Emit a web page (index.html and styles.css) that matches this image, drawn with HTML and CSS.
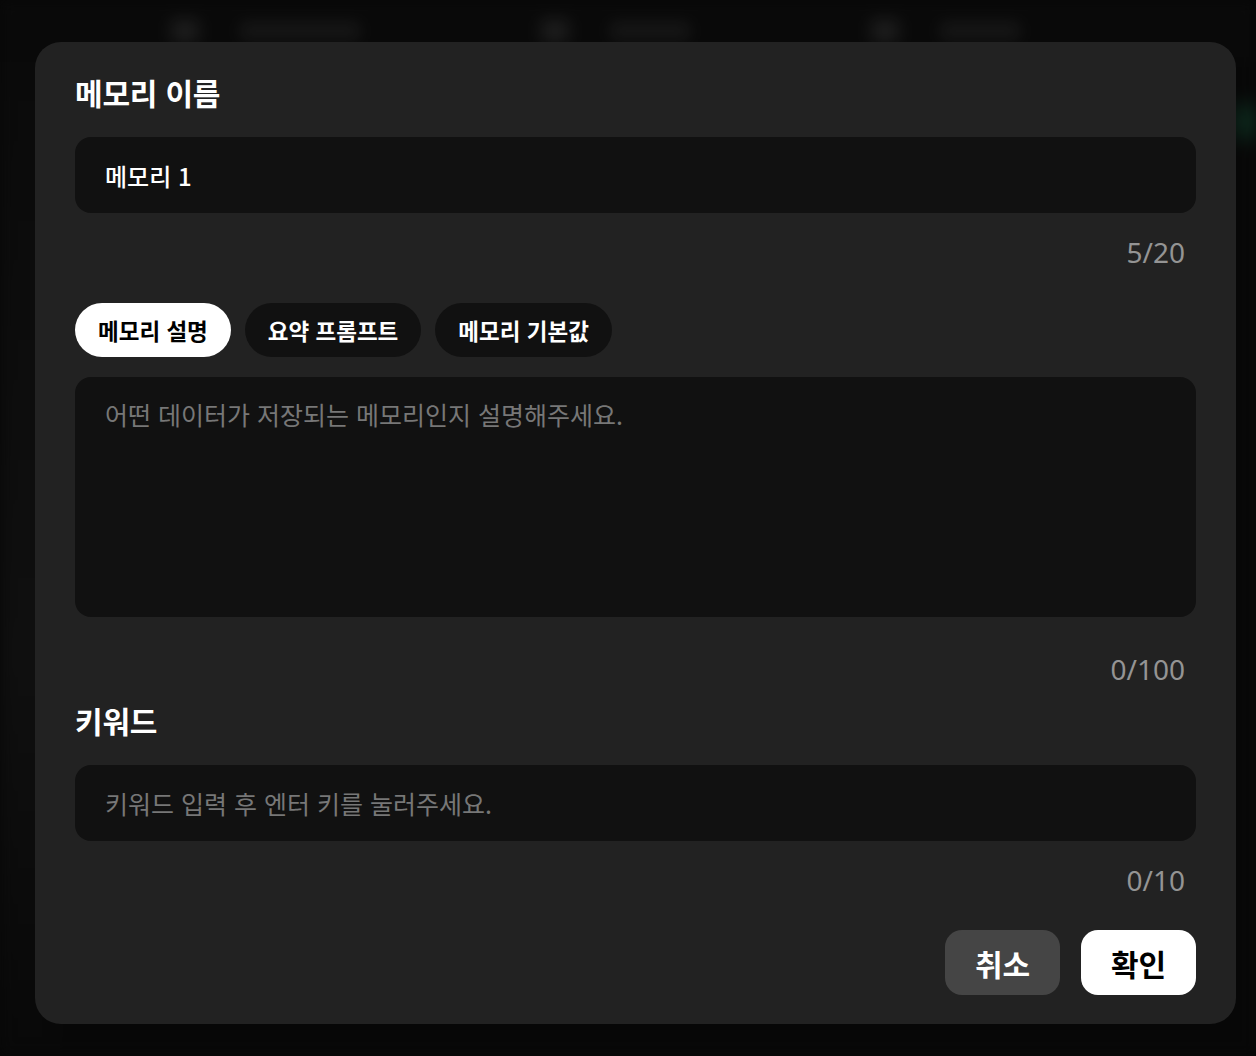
FILE: index.html
```html
<!DOCTYPE html>
<html lang="ko">
<head>
<meta charset="utf-8">
<title>메모리</title>
<link rel="stylesheet" href="styles.css">
</head>
<body>
<div class="page">
  <header class="page-header">
    <div class="nav-item"><span class="nav-icon"></span><span class="nav-text"></span></div>
    <div class="nav-item"><span class="nav-icon"></span><span class="nav-text short"></span></div>
    <div class="nav-item"><span class="nav-icon"></span><span class="nav-text short"></span></div>
  </header>
  <div class="page-body">
    <aside class="page-side"></aside>
    <main class="page-main"></main>
  </div>
</div>

<div class="overlay">
  <section class="modal">
    <h2 class="label">메모리 이름</h2>
    <input class="field" type="text" value="메모리 1">
    <div class="counter">5/20</div>

    <div class="tabs">
      <button class="tab active">메모리 설명</button>
      <button class="tab">요약 프롬프트</button>
      <button class="tab">메모리 기본값</button>
    </div>
    <textarea class="area" placeholder="어떤 데이터가 저장되는 메모리인지 설명해주세요."></textarea>
    <div class="counter counter-area">0/100</div>

    <h2 class="label label-keyword">키워드</h2>
    <input class="field field-keyword" type="text" placeholder="키워드 입력 후 엔터 키를 눌러주세요.">
    <div class="counter">0/10</div>

    <div class="actions">
      <button class="btn btn-cancel">취소</button>
      <button class="btn btn-ok">확인</button>
    </div>
  </section>
</div>
</body>
</html>
```

FILE: styles.css
```css
* { box-sizing: border-box; }

html, body {
  margin: 0;
  height: 100%;
}

body {
  background: #070707;
  font-family: "Noto Sans CJK KR", "Noto Sans", sans-serif;
  overflow: hidden;
}

/* blurred page behind the dialog */
.page {
  height: 100vh;
  display: flex;
  flex-direction: column;
  filter: blur(7px);
  opacity: 0.9;
}

.page-header {
  height: 62px;
  display: flex;
  gap: 180px;
  padding: 18px 0 0 170px;
  background: #0a0a0a;
}

.nav-item {
  display: flex;
  gap: 40px;
  align-items: flex-start;
}

.nav-icon {
  width: 30px;
  height: 26px;
  border-radius: 8px;
  background: #1c1c1c;
}

.nav-text {
  width: 120px;
  height: 18px;
  margin-top: 4px;
  border-radius: 6px;
  background: #181818;
}

.nav-text.short { width: 80px; }

.page-body {
  flex: 1;
  display: flex;
}

.page-side {
  width: 60px;
  background: linear-gradient(180deg, #0b0b0b 0%, #101010 60%, #090909 100%);
}

.page-main {
  flex: 1;
  background:
    radial-gradient(40px 30px at 100% 6%, rgba(20, 90, 60, 0.55), transparent 100%),
    #080808;
}

/* dialog */
.overlay {
  position: fixed;
  inset: 0;
  padding: 42px 0 0 35px;
}

.modal {
  width: 1201px;
  height: 982px;
  background: #222222;
  border-radius: 26px;
  padding: 31px 40px 29px 40px;
  display: flex;
  flex-direction: column;
}

.label {
  margin: 0;
  color: #ffffff;
  font-size: 30px;
  font-weight: 700;
  line-height: 38px;
  letter-spacing: -0.2px;
}

.field,
.area {
  display: block;
  width: 100%;
  border: none;
  outline: none;
  background: #111111;
  border-radius: 16px;
  color: #ffffff;
  font-family: inherit;
  font-size: 24px;
  padding: 0 30px;
}

.field {
  height: 76px;
  margin-top: 26px;
  font-weight: 500;
}

.field-keyword {
  margin-top: 26px;
  font-size: 25px;
  font-weight: 400;
}

.area {
  height: 240px;
  margin-top: 20px;
  resize: none;
  padding: 20px 30px;
  font-size: 25px;
  line-height: 34px;
}

.field::placeholder,
.area::placeholder {
  color: #777777;
  opacity: 1;
}

.counter {
  align-self: flex-end;
  margin: 21px 11px 0 0;
  color: #949494;
  font-size: 28px;
  line-height: 36px;
  font-family: "Noto Sans", "Noto Sans CJK KR", sans-serif;
}

.counter-area { margin-top: 34px; }

.label-keyword { margin-top: 14px; }

.tabs {
  display: flex;
  gap: 14px;
  margin-top: 33px;
}

.tab {
  height: 54px;
  border: none;
  border-radius: 27px;
  padding: 0 23px;
  background: #111111;
  color: #ffffff;
  font-family: inherit;
  font-size: 22.5px;
  font-weight: 700;
  cursor: pointer;
}

.tab.active {
  background: #ffffff;
  color: #000000;
}

.actions {
  margin-top: auto;
  display: flex;
  justify-content: flex-end;
  gap: 21px;
}

.btn {
  width: 115px;
  height: 65px;
  border: none;
  border-radius: 17px;
  font-family: inherit;
  font-size: 30px;
  font-weight: 700;
  cursor: pointer;
}

.btn-cancel {
  background: #454545;
  color: #ffffff;
}

.btn-ok {
  background: #ffffff;
  color: #000000;
}
```
